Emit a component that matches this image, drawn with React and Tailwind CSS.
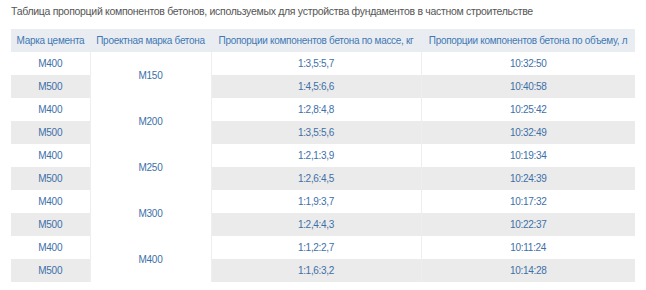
import React from 'react';

const groups = [
  { grade: 'М150', rows: [['М400', '1:3,5:5,7', '10:32:50'], ['М500', '1:4,5:6,6', '10:40:58']] },
  { grade: 'М200', rows: [['М400', '1:2,8:4,8', '10:25:42'], ['М500', '1:3,5:5,6', '10:32:49']] },
  { grade: 'М250', rows: [['М400', '1:2,1:3,9', '10:19:34'], ['М500', '1:2,6:4,5', '10:24:39']] },
  { grade: 'М300', rows: [['М400', '1:1,9:3,7', '10:17:32'], ['М500', '1:2,4:4,3', '10:22:37']] },
  { grade: 'М400', rows: [['М400', '1:1,2:2,7', '10:11:24'], ['М500', '1:1,6:3,2', '10:14:28']] },
];

function App() {
  return (
    <div className="w-[646px] h-[290px] bg-white pl-[11px] pt-[4px]" style={{ fontFamily: '"Liberation Sans", Arial, sans-serif' }}>
      <p className="text-[10.5px] leading-[14px] tracking-[-0.3px] text-[#555]">
        Таблица пропорций компонентов бетонов, используемых для устройства фундаментов в частном строительстве
      </p>
      <table className="mt-[11px] w-[624px] border-collapse table-fixed text-[10px] tracking-[-0.3px] text-[#3d6fa8]">
        <colgroup>
          <col className="w-[79px]" />
          <col className="w-[121px]" />
          <col className="w-[210px]" />
          <col className="w-[214px]" />
        </colgroup>
        <thead>
          <tr className="h-[23px] bg-[#e9edf1] text-[#3f78b5]">
            <th className="font-normal text-center whitespace-nowrap">Марка цемента</th>
            <th className="font-normal text-center whitespace-nowrap">Проектная марка бетона</th>
            <th className="font-normal text-center whitespace-nowrap">Пропорции компонентов бетона по массе, кг</th>
            <th className="font-normal text-center whitespace-nowrap">Пропорции компонентов бетона по объему, л</th>
          </tr>
        </thead>
        <tbody>
          {groups.map((g) =>
            g.rows.map((r, i) => (
              <tr key={g.grade + i} className="h-[23px]">
                <td className={`text-center border-r border-[#eeeeee] ${i === 1 ? 'bg-[#ebebeb]' : 'bg-white'}`}>{r[0]}</td>
                {i === 0 && (
                  <td rowSpan={2} className="text-center bg-white border-r border-[#eeeeee]">{g.grade}</td>
                )}
                <td className={`text-center border-r border-[#eeeeee] ${i === 1 ? 'bg-[#ebebeb]' : 'bg-white'}`}>{r[1]}</td>
                <td className={`text-center ${i === 1 ? 'bg-[#ebebeb]' : 'bg-white'}`}>{r[2]}</td>
              </tr>
            ))
          )}
        </tbody>
      </table>
    </div>
  );
}

export default App;
